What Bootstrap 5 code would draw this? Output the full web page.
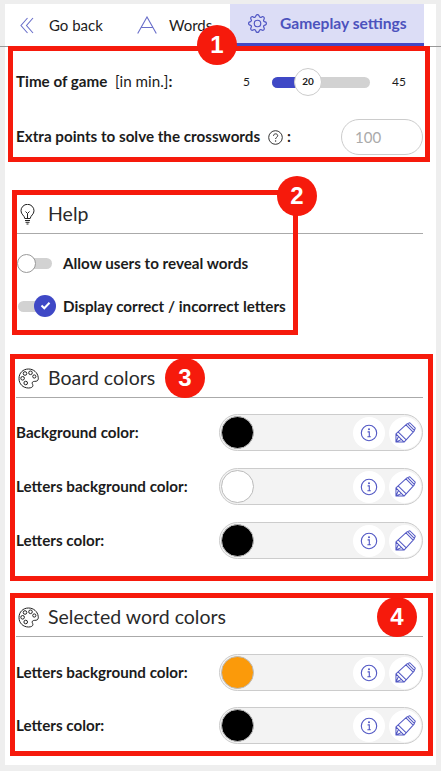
<!DOCTYPE html>
<html lang="en">
<head>
  <meta charset="UTF-8" />
  <meta name="viewport" content="width=device-width, initial-scale=1.0" />
  <title>Gameplay settings</title>
  <link href="https://cdn.jsdelivr.net/npm/bootstrap@5.3.0/dist/css/bootstrap.min.css" rel="stylesheet" />
  <style>
    body {
      background-color: #eeeeee;
      font-family: "Lato", "Liberation Sans", sans-serif;
      color: #1c1c1c;
      overflow: hidden;
    }

    .page-wrap { position: relative; width: 441px; height: 771px; padding-top: 4px; }

    .tab-bar { height: 43px; padding: 0 5px; border-bottom: 1px solid #999; }
    .tab-bar-inner { background: #fff; height: 42px; }
    .tab-item { height: 42px; font-size: 15px; white-space: nowrap; }
    .tab-back { width: 120px; padding-left: 15px; gap: 15px; }
    .tab-words { width: 105px; padding-left: 12px; gap: 12px; }
    .tab-active {
      width: 194px; padding-left: 18px; gap: 13px; font-size: 15.6px;
      background: #dcddf6; color: #4c52bd; font-weight: 700;
      border-bottom: 3px solid #4349c4;
    }

    .panel { background: #fff; width: 431px; height: 718px; margin-left: 5px; padding: 17px 13px 0 11px; }

    .bold-label { font-size: 15.2px; font-weight: 700; white-space: nowrap; }
    .plain-part { font-weight: 400; }
    .lift-label { margin-bottom: 2px; }

    .time-row { height: 36px; margin-bottom: 19px; }
    .extra-row { height: 36px; }
    .range-min { width: 7px; margin-left: auto; font-size: 12px; }
    .range-track { width: 98px; height: 11px; margin-left: 22px; background: #d2d2d2; border-radius: 6px; position: relative; }
    .range-fill { height: 11px; background: #3f48c6; border-radius: 6px 0 0 6px; }
    .range-thumb {
      position: absolute; left: 22px; top: -9px; width: 28px; height: 28px;
      background: #fff; border: 1px solid #ccc; border-radius: 50%;
      font-size: 10px; font-weight: 700;
    }
    .range-max { margin-left: 22px; margin-right: 17px; font-size: 12px; }
    .points-box {
      width: 82px; height: 36px; border: 1px solid #ccc; border-radius: 18px;
      color: #aaa; font-size: 15px; padding-left: 13px;
    }

    .section-head { height: 39px; border-bottom: 1px solid #aaa; font-size: 19.5px; font-weight: 400; color: #2a2a2a; }
    .head-icon { width: 32px; padding-left: 2px; }
    .head-help { margin-top: 40px; margin-bottom: 14px; }
    .head-board { margin-top: 38px; margin-bottom: 16px; }
    .head-selected { margin-top: 39px; margin-bottom: 17px; }

    .toggle-row { height: 30px; margin-bottom: 13px; }
    .toggle-track { width: 34px; height: 11px; margin-left: 2px; margin-right: 11px; background: #d2d2d2; border-radius: 6px; position: relative; flex: none; }
    .knob-off { position: absolute; left: -1px; top: -4px; width: 19px; height: 19px; background: #fff; border: 1px solid #999; border-radius: 50%; }
    .knob-on { position: absolute; left: 16px; top: -6px; width: 22px; height: 22px; background: #3f48c6; border-radius: 50%; }

    .color-row { height: 37px; margin-bottom: 17px; }
    .color-row.tight { margin-bottom: 16px; }
    .color-pill {
      width: 204px; height: 37px; margin-left: auto; padding: 0 1px;
      background: #f3f3f3; border: 1px solid #ccc; border-radius: 19px;
    }
    .swatch { width: 33px; height: 33px; border-radius: 50%; border: 1px solid #bbb; flex: none; }
    .swatch-black { background: #000; }
    .swatch-white { background: #fff; }
    .swatch-orange { background: #fb9a0a; }
    .round-btn { width: 32px; height: 32px; background: #fff; border-radius: 50%; flex: none; }
    .round-btn + .round-btn { margin-left: 4px; }

    .mark-box { position: absolute; border: 5px solid #f61a0c; pointer-events: none; }
    .box-one { left: 8px; top: 46px; width: 422px; height: 116px; }
    .box-two { left: 12px; top: 190px; width: 286px; height: 145px; }
    .box-three { left: 10px; top: 354px; width: 423px; height: 227px; }
    .box-four { left: 10px; top: 593px; width: 423px; height: 163px; }
    .mark-num {
      position: absolute; width: 40px; height: 40px; border-radius: 50%;
      background: #f61a0c; color: #fff; font-family: "Liberation Sans", sans-serif;
      font-size: 24px; font-weight: 700;
    }
    .num-one { left: 197px; top: 25px; }
    .num-two { left: 277px; top: 176px; }
    .num-three { left: 165px; top: 358px; }
    .num-four { left: 377px; top: 597px; }
  </style>
</head>
<body>

<svg width="0" height="0" class="position-absolute">
  <symbol id="icon-info" viewBox="0 0 18 18">
    <circle cx="9" cy="9" r="7.7" fill="none" stroke="#5157c4" stroke-width="1.1"/>
    <circle cx="9" cy="5.3" r="1" fill="#5157c4"/>
    <path d="M7.6 7.9H9.3V12.6M7.4 12.8H10.8" fill="none" stroke="#5157c4" stroke-width="1.1"/>
  </symbol>
  <symbol id="icon-pencil" viewBox="0 0 22 22">
    <path d="M1 21V12.500L12.500 2 15.500 .8 21.200 6.500 20 9.500 9.500 21ZM3.500 10.500 11.500 18.500M1 12.500 9.500 21M11.500 3 19 10.500M13.500 2 20 8.500M3.500 15.500 1 21 6.500 18.500" fill="none" stroke="#5157c4" stroke-width="1.050" stroke-linejoin="round"/>
  </symbol>
  <symbol id="icon-palette" viewBox="0 0 21 21">
    <path d="M10.5 1C5 1 1 5 1 10.5S5 20 10.5 20c2.5 0 4.6-.9 4.4-2.6-.2-1.500-1.300-2-.5-3.200 1-1.400 3.600-.4 4.900-1.400 1-.9 1.200-2.200.9-3.500C19.600 4.500 15.500 1 10.500 1Z" fill="none" stroke="#222" stroke-width="1"/>
    <circle cx="7" cy="5.500" r="1.800" fill="none" stroke="#222"/>
    <circle cx="12.500" cy="4.800" r="1.800" fill="none" stroke="#222"/>
    <circle cx="16.300" cy="8.500" r="1.600" fill="none" stroke="#222"/>
    <circle cx="4.600" cy="10.300" r="1.800" fill="none" stroke="#222"/>
    <circle cx="7.700" cy="15" r="1.800" fill="none" stroke="#222"/>
  </symbol>
</svg>

<div class="page-wrap">

  <!-- Tabs -->
  <div class="tab-bar">
    <div class="tab-bar-inner d-flex">
      <div class="tab-item tab-back d-flex align-items-center">
        <svg width="14" height="17" viewBox="0 0 14 17"><path d="M7.500 1 1 8.500 7.500 16M13 1 6.500 8.500 13 16" fill="none" stroke="#6a6fca" stroke-width="1.100"/></svg>
        <span>Go back</span>
      </div>
      <div class="tab-item tab-words d-flex align-items-center">
        <svg width="20" height="18" viewBox="0 0 20 18"><path d="M.7 17.500 10 1l9.300 16.500M4.200 11.500h11.600" fill="none" stroke="#6a6fca" stroke-width="1.100"/></svg>
        <span>Words</span>
      </div>
      <div class="tab-item tab-active d-flex align-items-center">
        <svg width="19" height="19" viewBox="0 0 16 16" fill="#5157c4"><path d="M8 4.754a3.246 3.246 0 1 0 0 6.492 3.246 3.246 0 0 0 0-6.492zM5.754 8a2.246 2.246 0 1 1 4.492 0 2.246 2.246 0 0 1-4.492 0z"/><path d="M9.796 1.343c-.527-1.790-3.065-1.790-3.592 0l-.094.319a.873.873 0 0 1-1.255.52l-.292-.16c-1.640-.892-3.433.902-2.540 2.541l.159.292a.873.873 0 0 1-.52 1.255l-.319.094c-1.790.527-1.790 3.065 0 3.592l.319.094a.873.873 0 0 1 .52 1.255l-.16.292c-.892 1.640.901 3.434 2.541 2.540l.292-.159a.873.873 0 0 1 1.255.52l.094.319c.527 1.790 3.065 1.790 3.592 0l.094-.319a.873.873 0 0 1 1.255-.52l.292.16c1.640.893 3.434-.902 2.540-2.541l-.159-.292a.873.873 0 0 1 .52-1.255l.319-.094c1.790-.527 1.790-3.065 0-3.592l-.319-.094a.873.873 0 0 1-.52-1.255l.16-.292c.893-1.640-.902-3.433-2.541-2.540l-.292.159a.873.873 0 0 1-1.255-.52l-.094-.319zm-2.633.283c.246-.835 1.428-.835 1.674 0l.094.319a1.873 1.873 0 0 0 2.693 1.115l.291-.16c.764-.415 1.600.42 1.184 1.185l-.159.292a1.873 1.873 0 0 0 1.116 2.692l.318.094c.835.246.835 1.428 0 1.674l-.319.094a1.873 1.873 0 0 0-1.115 2.693l.16.291c.415.764-.42 1.600-1.185 1.184l-.291-.159a1.873 1.873 0 0 0-2.693 1.116l-.094.318c-.246.835-1.428.835-1.674 0l-.094-.319a1.873 1.873 0 0 0-2.692-1.115l-.292.16c-.764.415-1.600-.42-1.184-1.185l.159-.291A1.873 1.873 0 0 0 1.945 8.930l-.319-.094c-.835-.246-.835-1.428 0-1.674l.319-.094A1.873 1.873 0 0 0 3.060 4.377l-.16-.292c-.415-.764.42-1.600 1.185-1.184l.292.159a1.873 1.873 0 0 0 2.692-1.115l.094-.319z"/></svg>
        <span>Gameplay settings</span>
      </div>
    </div>
  </div>

  <div class="panel">

    <!-- Time and points -->
    <div class="time-row d-flex align-items-center">
      <span class="bold-label lift-label">Time of game <span class="plain-part">&nbsp;[in min.]</span>:</span>
      <span class="range-min">5</span>
      <div class="range-track">
        <div class="range-fill w-25"></div>
        <div class="range-thumb d-flex align-items-center justify-content-center">20</div>
      </div>
      <span class="range-max">45</span>
    </div>
    <div class="extra-row d-flex align-items-center">
      <span class="bold-label lift-label">Extra points to solve the crosswords</span>
      <svg class="ms-2" width="15" height="15" viewBox="0 0 15 15"><circle cx="7.500" cy="7.500" r="6.800" fill="none" stroke="#333"/><path d="M5.500 5.800c0-2.600 4.200-2.600 4.200-.1 0 1.500-2.100 1.600-2.100 3.300" fill="none" stroke="#333"/><circle cx="7.600" cy="11" r=".7" fill="#333"/></svg>
      <span class="bold-label lift-label ms-1">:</span>
      <div class="points-box ms-auto d-flex align-items-center">100</div>
    </div>

    <!-- Help -->
    <div class="section-head head-help d-flex align-items-center">
      <div class="head-icon ps-1">
        <svg class="d-block" width="15" height="21" viewBox="0 0 15 21"><path d="M4.800 14.500C4.500 11.500 1 10.500 1 6.800a6.500 6.500 0 0 1 13 0c0 3.700-3.500 4.700-3.800 7.700ZM5 16.500h5M5.500 18.300h4M6.500 20h2M5.500 7.500l2 2 2-2M7.500 9.500v5" fill="none" stroke="#222"/></svg>
      </div>
      <span>Help</span>
    </div>
    <div class="toggle-row d-flex align-items-center">
      <div class="toggle-track"><div class="knob-off"></div></div>
      <span class="bold-label">Allow users to reveal words</span>
    </div>
    <div class="toggle-row d-flex align-items-center">
      <div class="toggle-track">
        <div class="knob-on d-flex align-items-center justify-content-center">
          <svg width="11" height="9" viewBox="0 0 11 9"><path d="M1.500 4.500 4.300 7.300 9.500 1.800" fill="none" stroke="#fff" stroke-width="2"/></svg>
        </div>
      </div>
      <span class="bold-label">Display correct / incorrect letters</span>
    </div>

    <!-- Board colors -->
    <div class="section-head head-board d-flex align-items-center">
      <div class="head-icon"><svg class="d-block" width="21" height="21"><use href="#icon-palette"/></svg></div>
      <span>Board colors</span>
    </div>
    <div class="color-row d-flex align-items-center">
      <span class="bold-label">Background color:</span>
      <div class="color-pill d-flex align-items-center">
        <div class="swatch swatch-black me-auto"></div>
        <div class="round-btn d-flex align-items-center justify-content-center"><svg width="18" height="18"><use href="#icon-info"/></svg></div>
        <div class="round-btn d-flex align-items-center justify-content-center"><svg width="21" height="21"><use href="#icon-pencil"/></svg></div>
      </div>
    </div>
    <div class="color-row d-flex align-items-center">
      <span class="bold-label">Letters background color:</span>
      <div class="color-pill d-flex align-items-center">
        <div class="swatch swatch-white me-auto"></div>
        <div class="round-btn d-flex align-items-center justify-content-center"><svg width="18" height="18"><use href="#icon-info"/></svg></div>
        <div class="round-btn d-flex align-items-center justify-content-center"><svg width="21" height="21"><use href="#icon-pencil"/></svg></div>
      </div>
    </div>
    <div class="color-row d-flex align-items-center mb-0">
      <span class="bold-label">Letters color:</span>
      <div class="color-pill d-flex align-items-center">
        <div class="swatch swatch-black me-auto"></div>
        <div class="round-btn d-flex align-items-center justify-content-center"><svg width="18" height="18"><use href="#icon-info"/></svg></div>
        <div class="round-btn d-flex align-items-center justify-content-center"><svg width="21" height="21"><use href="#icon-pencil"/></svg></div>
      </div>
    </div>

    <!-- Selected word colors -->
    <div class="section-head head-selected d-flex align-items-center">
      <div class="head-icon"><svg class="d-block" width="21" height="21"><use href="#icon-palette"/></svg></div>
      <span>Selected word colors</span>
    </div>
    <div class="color-row tight d-flex align-items-center">
      <span class="bold-label">Letters background color:</span>
      <div class="color-pill d-flex align-items-center">
        <div class="swatch swatch-orange me-auto"></div>
        <div class="round-btn d-flex align-items-center justify-content-center"><svg width="18" height="18"><use href="#icon-info"/></svg></div>
        <div class="round-btn d-flex align-items-center justify-content-center"><svg width="21" height="21"><use href="#icon-pencil"/></svg></div>
      </div>
    </div>
    <div class="color-row d-flex align-items-center mb-0">
      <span class="bold-label">Letters color:</span>
      <div class="color-pill d-flex align-items-center">
        <div class="swatch swatch-black me-auto"></div>
        <div class="round-btn d-flex align-items-center justify-content-center"><svg width="18" height="18"><use href="#icon-info"/></svg></div>
        <div class="round-btn d-flex align-items-center justify-content-center"><svg width="21" height="21"><use href="#icon-pencil"/></svg></div>
      </div>
    </div>
  </div>

  <!-- Red annotation boxes laid over the page -->
  <div class="mark-box box-one"></div>
  <div class="mark-box box-two"></div>
  <div class="mark-box box-three"></div>
  <div class="mark-box box-four"></div>
  <div class="mark-num num-one d-flex align-items-center justify-content-center">1</div>
  <div class="mark-num num-two d-flex align-items-center justify-content-center">2</div>
  <div class="mark-num num-three d-flex align-items-center justify-content-center">3</div>
  <div class="mark-num num-four d-flex align-items-center justify-content-center">4</div>
</div>

<script src="https://cdn.jsdelivr.net/npm/bootstrap@5.3.0/dist/js/bootstrap.bundle.min.js"></script>
</body>
</html>
